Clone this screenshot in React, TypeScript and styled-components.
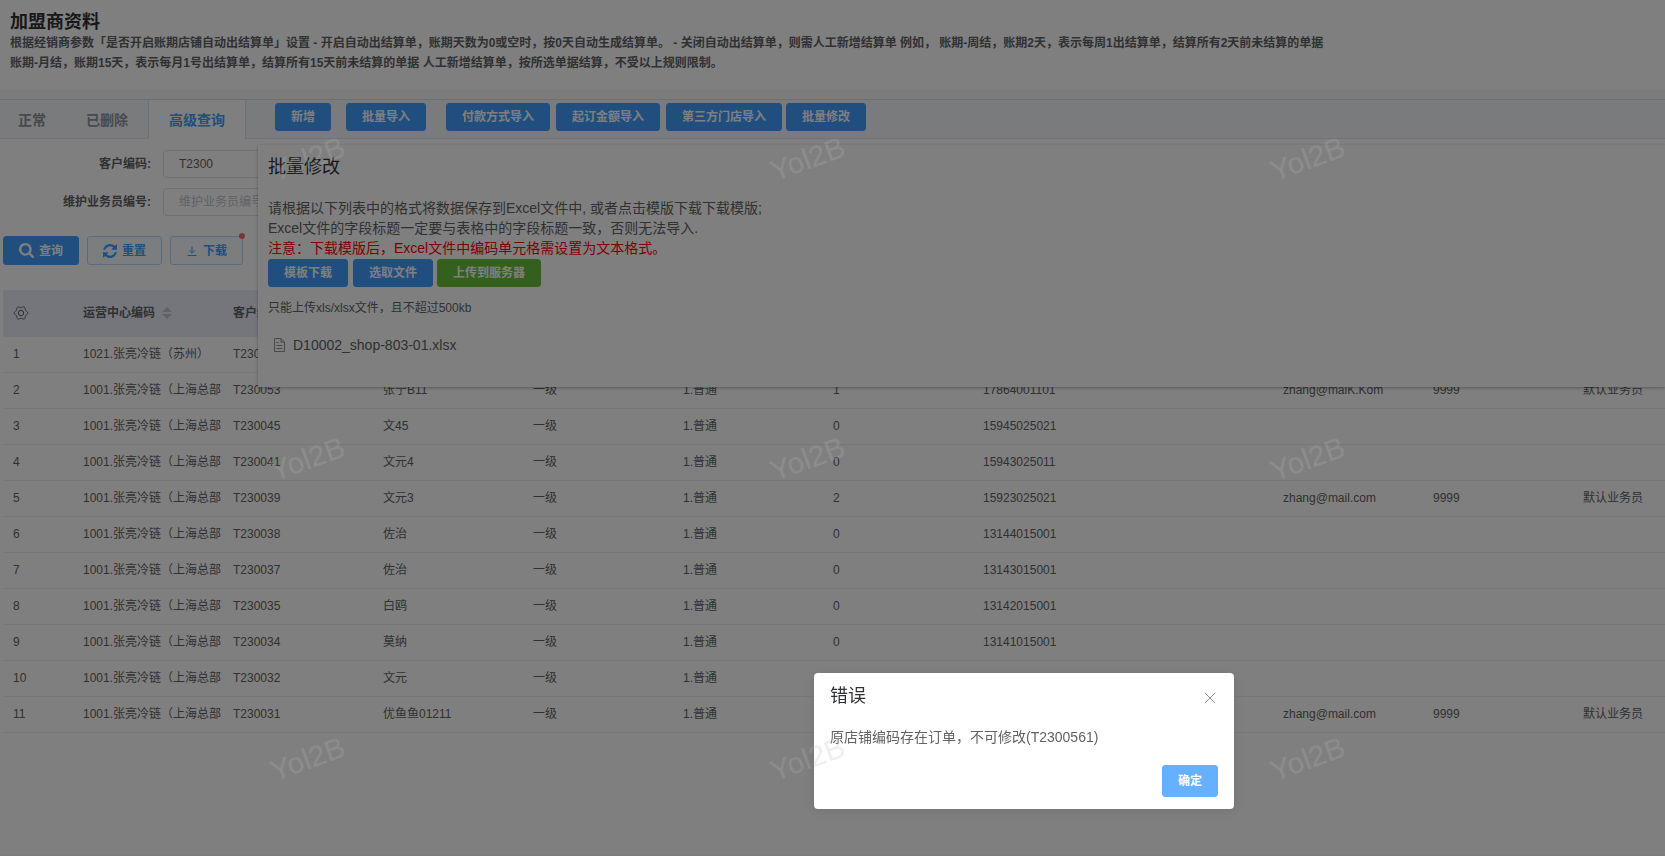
import React from "react";
import styled, { createGlobalStyle, css } from "styled-components";

const GlobalStyle = createGlobalStyle`
  *, *::before, *::after { box-sizing: border-box; }
  body {
    margin: 0;
    background: #f8f8f8;
    color: #606266;
    font-family: "Liberation Sans", "Noto Sans CJK SC", sans-serif;
    font-size: 12px;
    line-height: 16px;
    overflow: hidden;
  }
  button, input { font-family: inherit; font-size: inherit; }
  h1, h2, p { margin: 0; }
`;

const Page = styled.div`
  display: flex;
  flex-direction: column;
  min-height: 100vh;
`;

const PageHeader = styled.header`
  padding: 12px 10px 16px;
  background: #fff;
`;

const PageTitle = styled.h1`
  color: #303133;
  font-size: 18px;
  line-height: 21px;
`;

const PageNote = styled.p`
  width: 80%;
  font-weight: 700;
  line-height: 20px;
`;

const TabStrip = styled.div`
  display: flex;
  align-items: stretch;
  height: 40px;
  margin-top: 10px;
  background: #f5f7fa;
  border-top: 1px solid #dcdfe6;
  border-bottom: 1px solid #e4e7ed;
`;

const TabList = styled.div`
  display: flex;
  margin-bottom: -1px;
  margin-left: -2px;
`;

const Tab = styled.button<{ $active?: boolean }>`
  padding: 0 20px;
  background: transparent;
  border: 0;
  color: #909399;
  font-size: 14px;
  font-weight: 700;
  line-height: 36px;
  ${(p) =>
    p.$active &&
    css`
      background: #fff;
      border: 0 solid #dcdfe6;
      border-width: 0 1px;
      color: #409eff;
    `}
`;

const Actions = styled.div`
  display: flex;
  align-items: flex-start;
  padding: 3px 0 0 29px;
`;

const ActionGroup = styled.div<{ $gap?: number; $after?: number }>`
  display: flex;
  gap: ${(p) => p.$gap ?? 0}px;
  margin-right: ${(p) => p.$after ?? 0}px;
`;

type Tone = "primary" | "success" | "light" | "plain";

const tones: Record<Tone, { bg: string; border: string; text: string }> = {
  primary: { bg: "#409eff", border: "#409eff", text: "#fff" },
  success: { bg: "#67c23a", border: "#67c23a", text: "#fff" },
  light: { bg: "#66b1ff", border: "#66b1ff", text: "#fff" },
  plain: { bg: "#f8fbff", border: "#b3d8ff", text: "#409eff" },
};

const Button = styled.button<{ $tone?: Tone; $height?: number }>`
  position: relative;
  display: inline-flex;
  align-items: center;
  justify-content: center;
  gap: 5px;
  height: ${(p) => p.$height ?? 28}px;
  padding: 0 15px;
  background: ${(p) => tones[p.$tone ?? "primary"].bg};
  border: 1px solid ${(p) => tones[p.$tone ?? "primary"].border};
  border-radius: 3px;
  color: ${(p) => tones[p.$tone ?? "primary"].text};
  font-weight: 700;
  line-height: 12px;
  white-space: nowrap;
`;

const Dot = styled.span`
  position: absolute;
  top: -4px;
  right: -3px;
  width: 6px;
  height: 6px;
  background: #f56c6c;
  border-radius: 50%;
`;

const Content = styled.main`
  flex: 1;
  margin-bottom: 1px;
  padding-top: 11px;
  background: #fff;
`;

const FormRow = styled.div`
  display: flex;
  align-items: center;
  height: 28px;
  margin-bottom: 10px;
`;

const FieldLabel = styled.label`
  width: 163px;
  padding-right: 12px;
  font-weight: 700;
  text-align: right;
`;

const TextField = styled.input`
  width: 180px;
  height: 28px;
  padding: 0 15px;
  background: #fff;
  border: 1px solid #dcdfe6;
  border-radius: 4px;
  color: #606266;
  &::placeholder { color: #c0c4cc; }
`;

const QueryBar = styled.div`
  display: flex;
  gap: 8px;
  padding: 10px 0 25px 3px;
`;

const TableWrap = styled.div`
  margin-left: 3px;
  overflow: hidden;
`;

const Table = styled.table`
  width: 1720px;
  table-layout: fixed;
  border-collapse: separate;
  border-spacing: 0;
`;

const IndexCol = styled.col`
  width: 70px;
`;

const DataCol = styled.col`
  width: 150px;
`;

const Th = styled.th`
  height: 47px;
  padding: 0 0 2px 10px;
  background: #ebedf7;
  text-align: left;
  font-weight: 700;
`;

const Td = styled.td`
  height: 36px;
  padding: 0 0 2px 10px;
  border-bottom: 1px solid #ebeef5;
  white-space: nowrap;
`;

const HeadCell = styled.span`
  display: flex;
  align-items: center;
  gap: 6px;
`;

const Popup = styled.section`
  position: absolute;
  top: 145px;
  left: 258px;
  right: 0;
  padding: 10px 10px 32px;
  background: #fff;
  box-shadow: 0 1px 3px rgba(0, 0, 0, 0.3);
`;

const PopupTitle = styled.h2`
  margin-bottom: 18px;
  color: #303133;
  font-size: 18px;
  font-weight: 400;
  line-height: 25px;
`;

const PopupText = styled.p<{ $warn?: boolean }>`
  color: ${(p) => (p.$warn ? "#f00" : "#606266")};
  font-size: 14px;
  line-height: 20px;
`;

const PopupActions = styled.div`
  display: flex;
  margin-top: 1px;
`;

const PopupHint = styled.p`
  margin-top: 11px;
  line-height: 20px;
`;

const FileItem = styled.div`
  display: flex;
  align-items: center;
  gap: 8px;
  margin-top: 17px;
  padding-left: 6px;
  font-size: 14px;
  line-height: 20px;
  svg { color: #909399; }
`;

const Backdrop = styled.div`
  position: fixed;
  inset: 0;
  background: rgba(0, 0, 0, 0.5);
`;

const Dialog = styled.div`
  position: fixed;
  top: 673px;
  left: 814px;
  width: 420px;
  padding: 10px 16px 12px;
  background: #fff;
  border-radius: 4px;
  box-shadow: 0 2px 12px rgba(0, 0, 0, 0.1);
`;

const DialogHead = styled.div`
  display: flex;
  align-items: center;
  justify-content: space-between;
`;

const DialogTitle = styled.h2`
  color: #303133;
  font-size: 18px;
  font-weight: 400;
  line-height: 26px;
`;

const CloseButton = styled.button`
  display: flex;
  padding: 4px 2px 0;
  background: transparent;
  border: 0;
  color: #909399;
`;

const DialogMessage = styled.p`
  margin: 16px 0;
  font-size: 14px;
  line-height: 24px;
`;

const DialogFoot = styled.div`
  display: flex;
  justify-content: flex-end;
`;

const Watermarks = styled.div`
  position: fixed;
  inset: 0;
  display: grid;
  grid-template-columns: repeat(auto-fill, 500px);
  grid-auto-rows: 300px;
  padding: 9px 0 0 58px;
  overflow: hidden;
  pointer-events: none;
`;

const Watermark = styled.span`
  place-self: center;
  color: rgba(184, 184, 184, 0.24);
  font-size: 30px;
  line-height: 34px;
  transform: rotate(-20deg);
`;

const SearchIcon = () => (
  <svg width="15" height="15" viewBox="0 128 1664 1664" fill="currentColor" aria-hidden="true">
    <path d="M1152 832q0-185-131.5-316.5T704 384 387.5 515.5 256 832t131.5 316.5T704 1280t316.5-131.5T1152 832zm512 832q0 52-38 90t-90 38q-54 0-90-38l-343-342q-179 124-399 124-143 0-273.5-55.5t-225-150-150-225T0 832t55.5-273.5 150-225 225-150T704 128t273.5 55.5 225 150 150 225T1408 832q0 220-124 399l343 343q37 37 37 90z" />
  </svg>
);

const RefreshIcon = () => (
  <svg width="14" height="14" viewBox="0 0 1536 1536" fill="currentColor" aria-hidden="true">
    <path d="M1511 928q0 5-1 7-64 268-268 434.5T764 1536q-146 0-282.5-55T238 1324l-129 129q-19 19-45 19t-45-19-19-45V960q0-26 19-45t45-19h448q26 0 45 19t19 45-19 45l-137 137q71 66 161 102t187 36q134 0 250-65t186-179q11-17 53-117 8-23 30-23h192q13 0 22.5 9.5t9.5 22.5zm25-800v448q0 26-19 45t-45 19h-448q-26 0-45-19t-19-45 19-45l138-138Q969 256 768 256q-134 0-250 65T332 500q-11 17-53 117-8 23-30 23H50q-13 0-22.5-9.5T18 608v-7q65-268 270-434.5T768 0q146 0 284 55.5T1297 212l130-129q19-19 45-19t45 19 19 45z" />
  </svg>
);

const DownloadIcon = () => (
  <svg width="12" height="12" viewBox="0 0 12 12" fill="none" stroke="currentColor" aria-hidden="true">
    <path d="M6 1.5V8M3.2 5.4 6 8.2 8.8 5.4M1.5 10.5h9" />
  </svg>
);

const SortIcon = () => (
  <svg width="12" height="12" viewBox="0 0 12 12" fill="#c0c4cc" aria-hidden="true">
    <path d="M6 0 11 5H1zM6 12 1 7h10z" />
  </svg>
);

const CloseIcon = () => (
  <svg width="12" height="12" viewBox="0 0 12 12" fill="none" stroke="currentColor" aria-hidden="true">
    <path d="M1 1 11 11M11 1 1 11" />
  </svg>
);

const FileIcon = () => (
  <svg width="11" height="14" viewBox="0 0 11 14" fill="none" stroke="currentColor" aria-hidden="true">
    <path d="M.5.5h6.4l3.6 3.6v9.4H.5zM6.9.5v3.6h3.6M2.5 4.5h2M2.5 7.5h6M2.5 10.5h6" />
  </svg>
);

// Six-lobed gear outline, sampled around the circle.
const gearPoints = Array.from({ length: 72 }, (_, i) => {
  const a = (i / 72) * Math.PI * 2;
  const r = 6 + 0.8 * Math.cos(6 * a);
  return `${(8 + r * Math.cos(a)).toFixed(2)},${(8 + r * Math.sin(a)).toFixed(2)}`;
}).join(" ");

const GearIcon = () => (
  <svg width="16" height="16" viewBox="0 0 16 16" fill="none" stroke="currentColor" aria-hidden="true">
    <polygon points={gearPoints} />
    <circle cx="8" cy="8" r="2.7" />
  </svg>
);

const columns = ["运营中心编码", "客户编码", "", "", "", "", "", "", "", "", ""];

const SH = "1001.张亮冷链（上海总部";

const rows: string[][] = [
  ["1021.张亮冷链（苏州）", "T230056", "", "", "", "", "", "", "", "", ""],
  [SH, "T230053", "张宁B11", "一级", "1.普通", "1", "17864001101", "", "zhang@maiK.Kom", "9999", "默认业务员"],
  [SH, "T230045", "文45", "一级", "1.普通", "0", "15945025021", "", "", "", ""],
  [SH, "T230041", "文元4", "一级", "1.普通", "0", "15943025011", "", "", "", ""],
  [SH, "T230039", "文元3", "一级", "1.普通", "2", "15923025021", "", "zhang@mail.com", "9999", "默认业务员"],
  [SH, "T230038", "佐治", "一级", "1.普通", "0", "13144015001", "", "", "", ""],
  [SH, "T230037", "佐治", "一级", "1.普通", "0", "13143015001", "", "", "", ""],
  [SH, "T230035", "白鸥", "一级", "1.普通", "0", "13142015001", "", "", "", ""],
  [SH, "T230034", "莫纳", "一级", "1.普通", "0", "13141015001", "", "", "", ""],
  [SH, "T230032", "文元", "一级", "1.普通", "", "", "", "", "", ""],
  [SH, "T230031", "优鱼鱼01211", "一级", "1.普通", "", "", "", "zhang@mail.com", "9999", "默认业务员"],
];

export default function App() {
  return (
    <>
      <GlobalStyle />
      <Page>
        <PageHeader>
          <PageTitle>加盟商资料</PageTitle>
          <PageNote>
            根据经销商参数「是否开启账期店铺自动出结算单」设置 - 开启自动出结算单，账期天数为0或空时，按0天自动生成结算单。 -
            关闭自动出结算单，则需人工新增结算单 例如， 账期-周结，账期2天，表示每周1出结算单，结算所有2天前未结算的单据
            <br />
            账期-月结，账期15天，表示每月1号出结算单，结算所有15天前未结算的单据 人工新增结算单，按所选单据结算，不受以上规则限制。
          </PageNote>
        </PageHeader>

        <TabStrip>
          <TabList role="tablist">
            <Tab role="tab">正常</Tab>
            <Tab role="tab">已删除</Tab>
            <Tab role="tab" aria-selected="true" $active>高级查询</Tab>
          </TabList>
          <Actions>
            <ActionGroup $gap={15} $after={20}>
              <Button>新增</Button>
              <Button>批量导入</Button>
            </ActionGroup>
            <ActionGroup $gap={6} $after={4}>
              <Button>付款方式导入</Button>
              <Button>起订金额导入</Button>
              <Button>第三方门店导入</Button>
            </ActionGroup>
            <Button>批量修改</Button>
          </Actions>
        </TabStrip>

        <Content>
          <FormRow>
            <FieldLabel htmlFor="customer-code">客户编码:</FieldLabel>
            <TextField id="customer-code" defaultValue="T2300" />
          </FormRow>
          <FormRow>
            <FieldLabel htmlFor="staff-code">维护业务员编号:</FieldLabel>
            <TextField id="staff-code" placeholder="维护业务员编号" />
          </FormRow>
          <QueryBar>
            <Button $height={29}><SearchIcon />查询</Button>
            <Button $height={29} $tone="plain"><RefreshIcon />重置</Button>
            <Button $height={29} $tone="plain"><DownloadIcon />下载<Dot /></Button>
          </QueryBar>

          <TableWrap>
            <Table>
              <colgroup>
                <IndexCol />
                {columns.map((_, i) => <DataCol key={i} />)}
              </colgroup>
              <thead>
                <tr>
                  <Th aria-label="列设置"><HeadCell><GearIcon /></HeadCell></Th>
                  {columns.map((c, i) => (
                    <Th key={i}><HeadCell>{c}{i === 0 && <SortIcon />}</HeadCell></Th>
                  ))}
                </tr>
              </thead>
              <tbody>
                {rows.map((r, i) => (
                  <tr key={i}>
                    <Td>{i + 1}</Td>
                    {r.map((v, j) => <Td key={j}>{v}</Td>)}
                  </tr>
                ))}
              </tbody>
            </Table>
          </TableWrap>
        </Content>
      </Page>

      <Popup aria-label="批量修改">
        <PopupTitle>批量修改</PopupTitle>
        <PopupText>请根据以下列表中的格式将数据保存到Excel文件中, 或者点击模版下载下载模版;</PopupText>
        <PopupText>Excel文件的字段标题一定要与表格中的字段标题一致，否则无法导入.</PopupText>
        <PopupText $warn>注意：下载模版后，Excel文件中编码单元格需设置为文本格式。</PopupText>
        <PopupActions>
          <ActionGroup $gap={5} $after={4}>
            <Button>模板下载</Button>
            <Button>选取文件</Button>
          </ActionGroup>
          <Button $tone="success">上传到服务器</Button>
        </PopupActions>
        <PopupHint>只能上传xls/xlsx文件，且不超过500kb</PopupHint>
        <FileItem><FileIcon />D10002_shop-803-01.xlsx</FileItem>
      </Popup>

      <Backdrop />

      <Dialog role="alertdialog" aria-label="错误">
        <DialogHead>
          <DialogTitle>错误</DialogTitle>
          <CloseButton aria-label="关闭"><CloseIcon /></CloseButton>
        </DialogHead>
        <DialogMessage>原店铺编码存在订单，不可修改(T2300561)</DialogMessage>
        <DialogFoot>
          <Button $tone="light" $height={32}>确定</Button>
        </DialogFoot>
      </Dialog>

      <Watermarks aria-hidden="true">
        {Array.from({ length: 9 }, (_, i) => <Watermark key={i}>Yol2B</Watermark>)}
      </Watermarks>
    </>
  );
}
